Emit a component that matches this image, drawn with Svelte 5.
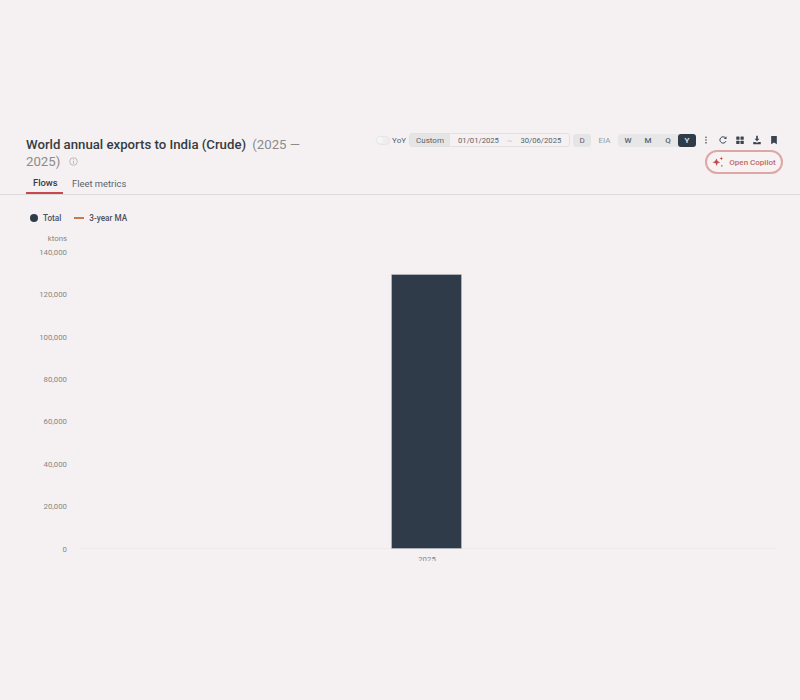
<script lang="ts">
  const ticks = [
    { label: '140,000', y: 21 },
    { label: '120,000', y: 63.4 },
    { label: '100,000', y: 105.7 },
    { label: '80,000', y: 148.1 },
    { label: '60,000', y: 190.4 },
    { label: '40,000', y: 232.8 },
    { label: '20,000', y: 275.1 },
    { label: '0', y: 317.5 },
  ];

  const periods = [
    { label: 'W', active: false },
    { label: 'M', active: false },
    { label: 'Q', active: false },
    { label: 'Y', active: true },
  ];
</script>

<div class="page">
  <header class="header">
    <h1 class="title">
      <span class="title-main">World annual exports to India (Crude)</span>
      <span class="title-range">(2025 — 2025)</span>
      <svg class="info" width="9" height="9" viewBox="0 0 10 10" aria-hidden="true">
        <circle cx="5" cy="5" r="4.2" fill="none" stroke="#a9a7a7" stroke-width="0.8" />
        <path d="M5 4.4v3M5 2.6v1" stroke="#a9a7a7" stroke-width="0.9" />
      </svg>
    </h1>

    <div class="tools">
      <div class="toolbar">
        <span class="switch"><span class="knob"></span></span>
        <span class="yoy">YoY</span>
        <div class="range">
          <button class="custom" type="button">Custom</button>
          <span class="date">01/01/2025</span>
          <span class="dash">~</span>
          <span class="date">30/06/2025</span>
        </div>
        <button class="chip day" type="button">D</button>
        <span class="eia">EIA</span>
        <div class="periods">
          {#each periods as p}
            <button class="period" class:active={p.active} type="button">{p.label}</button>
          {/each}
        </div>
        <div class="icons">
          <svg width="10" height="10" viewBox="0 0 12 12" aria-hidden="true">
            <circle cx="6" cy="2.6" r="0.95" fill="#3a4450" />
            <circle cx="6" cy="6" r="0.95" fill="#3a4450" />
            <circle cx="6" cy="9.4" r="0.95" fill="#3a4450" />
          </svg>
          <svg width="10" height="10" viewBox="0 0 12 12" aria-hidden="true">
            <path d="M9.6 7.4A3.8 3.8 0 1 1 9 3.5" fill="none" stroke="#3a4450" stroke-width="1.2" />
            <path d="M10.2 1.4v3.3H6.9z" fill="#3a4450" />
          </svg>
          <svg width="10" height="10" viewBox="0 0 12 12" aria-hidden="true">
            <rect x="1.5" y="1.8" width="3.9" height="3.9" rx="0.7" fill="#3a4450" />
            <rect x="6.6" y="1.8" width="3.9" height="3.9" rx="0.7" fill="#3a4450" />
            <rect x="1.5" y="6.9" width="3.9" height="3.9" rx="0.7" fill="#3a4450" />
            <rect x="6.6" y="6.9" width="3.9" height="3.9" rx="0.7" fill="#3a4450" />
          </svg>
          <svg width="10" height="10" viewBox="0 0 12 12" aria-hidden="true">
            <path d="M5 1h2v3.4h2L6 7.6 3 4.4h2z" fill="#3a4450" />
            <path d="M1.5 8.4h2.2L6 9.4l2.3-1h2.2V11h-9z" fill="#3a4450" />
          </svg>
          <svg width="10" height="10" viewBox="0 0 12 12" aria-hidden="true">
            <path d="M2.6 1.2h6.8v9.8L6 8.9 2.6 11z" fill="#3a4450" />
          </svg>
        </div>
      </div>
      <button class="copilot" type="button">
        <svg width="12" height="12" viewBox="0 0 12 12" aria-hidden="true">
          <path d="M4.6 2.6l1 2.6 2.6 1-2.6 1-1 2.8-1-2.8L.4 6.2l2.6-1z" fill="#c0484c" />
          <path d="M9.3.6l.5 1.3 1.3.5-1.3.5-.5 1.3-.5-1.3-1.3-.5 1.3-.5z" fill="#c0484c" />
          <circle cx="9.8" cy="9.8" r="0.9" fill="#8a8f96" />
        </svg>
        Open Copilot
      </button>
    </div>
  </header>

  <nav class="tabs">
    <button class="tab active" type="button">Flows</button>
    <button class="tab" type="button">Fleet metrics</button>
  </nav>

  <div class="legend">
    <span class="legend-item"><span class="dot"></span>Total</span>
    <span class="legend-item"><span class="line"></span>3-year MA</span>
  </div>

  <svg class="chart" width="800" height="330" viewBox="0 0 800 330">
    <text class="axis" x="67" y="10" text-anchor="end">ktons</text>
    {#each ticks as t}
      <text class="axis" x="67" y={t.y + 3} text-anchor="end">{t.label}</text>
    {/each}
    <line x1="80" x2="776" y1="317.5" y2="317.5" stroke="#ececec" />
    <rect x="391.5" y="43.5" width="70" height="274" fill="#303b49" stroke="#c9cdd2" stroke-width="0.5" />
    <text class="axis" x="427" y="331" text-anchor="middle">2025</text>
  </svg>
</div>

<style>
  :global(body) {
    background: #f5f1f2;
  }

  .page {
    height: 700px;
    overflow: hidden;
    padding-top: 133px;
    box-sizing: border-box;
    font-family: Roboto, "Liberation Sans", sans-serif;
    color: #3a4450;
  }

  button {
    font-family: inherit;
    border: none;
    padding: 0;
    cursor: pointer;
  }

  .header {
    display: flex;
    justify-content: space-between;
    padding: 0 17px 0 26px;
    height: 38px;
  }

  .title {
    margin: 3px 0 0;
    width: 280px;
    font-size: 13.2px;
    line-height: 17px;
    font-weight: 400;
  }

  .title-main {
    font-weight: 500;
    color: #343c44;
    margin-right: 3px;
  }

  .title-range {
    color: #8b8b8b;
  }

  .info {
    margin-left: 5px;
  }

  .tools {
    display: flex;
    flex-direction: column;
    align-items: flex-end;
  }

  .toolbar {
    display: flex;
    align-items: center;
    flex-shrink: 0;
    height: 14px;
    margin-right: 4px;
    font-size: 8px;
    color: #5b6269;
  }

  .switch {
    width: 12px;
    height: 7px;
    border: 1px solid #e5e5e5;
    border-radius: 5px;
    background: #efeded;
    display: flex;
    align-items: center;
  }

  .knob {
    width: 6px;
    height: 6px;
    border-radius: 50%;
    background: #f6f5f5;
  }

  .yoy {
    margin: 0 3px 0 2px;
  }

  .range {
    display: flex;
    align-items: center;
    width: 161px;
    height: 14px;
    border: 1px solid #e2e0e0;
    border-radius: 3px;
    box-sizing: border-box;
  }

  .custom {
    width: 40px;
    height: 100%;
    background: #e6e5e5;
    color: #5b6269;
    font-size: 8px;
  }

  .date {
    margin-left: 8px;
    font-size: 7.7px;
    color: #5a626b;
  }

  .dash {
    margin-left: 8px;
    color: #c4c4c4;
  }

  .chip {
    width: 18px;
    height: 13px;
    margin-left: 3px;
    border-radius: 3px;
    background: #e6e5e5;
    color: #5b6269;
    font-size: 8px;
  }

  .eia {
    width: 27px;
    text-align: center;
    color: #9a9a9a;
  }

  .periods {
    display: flex;
    border-radius: 3px;
    background: #e8e7e7;
  }

  .period {
    width: 20px;
    height: 13px;
    background: none;
    color: #5b6269;
    font-size: 8px;
    font-weight: 500;
  }

  .period.active {
    width: 18px;
    background: #303b49;
    color: #f4f1f1;
    border-radius: 3px;
  }

  .icons {
    display: flex;
    gap: 7px;
    margin-left: 5px;
  }

  .copilot {
    display: flex;
    align-items: center;
    justify-content: center;
    flex-shrink: 0;
    gap: 5px;
    width: 78px;
    height: 24px;
    margin-top: 3px;
    border: 2px solid #dfa6a6;
    border-radius: 12px;
    background: #f7f3f3;
    color: #c0676a;
    font-size: 8px;
    font-weight: 500;
  }

  .tabs {
    display: flex;
    padding-left: 26px;
    height: 23px;
    border-bottom: 1px solid #dcdada;
  }

  .tab {
    height: 23px;
    padding: 1px 7px 0;
    margin-right: 2px;
    background: none;
    font-size: 9.4px;
    color: #5b6269;
  }

  .tab.active {
    width: 37px;
    font-weight: 500;
    color: #343c44;
    border-bottom: 2px solid #c8474b;
  }

  .legend {
    display: flex;
    gap: 13px;
    padding: 16px 0 0 30px;
    height: 14px;
    font-size: 8.2px;
    font-weight: 500;
    color: #4a525b;
  }

  .legend-item {
    display: flex;
    align-items: center;
    gap: 5px;
  }

  .dot {
    width: 8px;
    height: 8px;
    border-radius: 50%;
    background: #303b49;
  }

  .line {
    width: 10px;
    height: 1.5px;
    background: #c87a4e;
  }

  .chart {
    display: block;
    margin-top: 6px;
  }

  .axis {
    font-size: 7.8px;
    fill: #858585;
  }
</style>
